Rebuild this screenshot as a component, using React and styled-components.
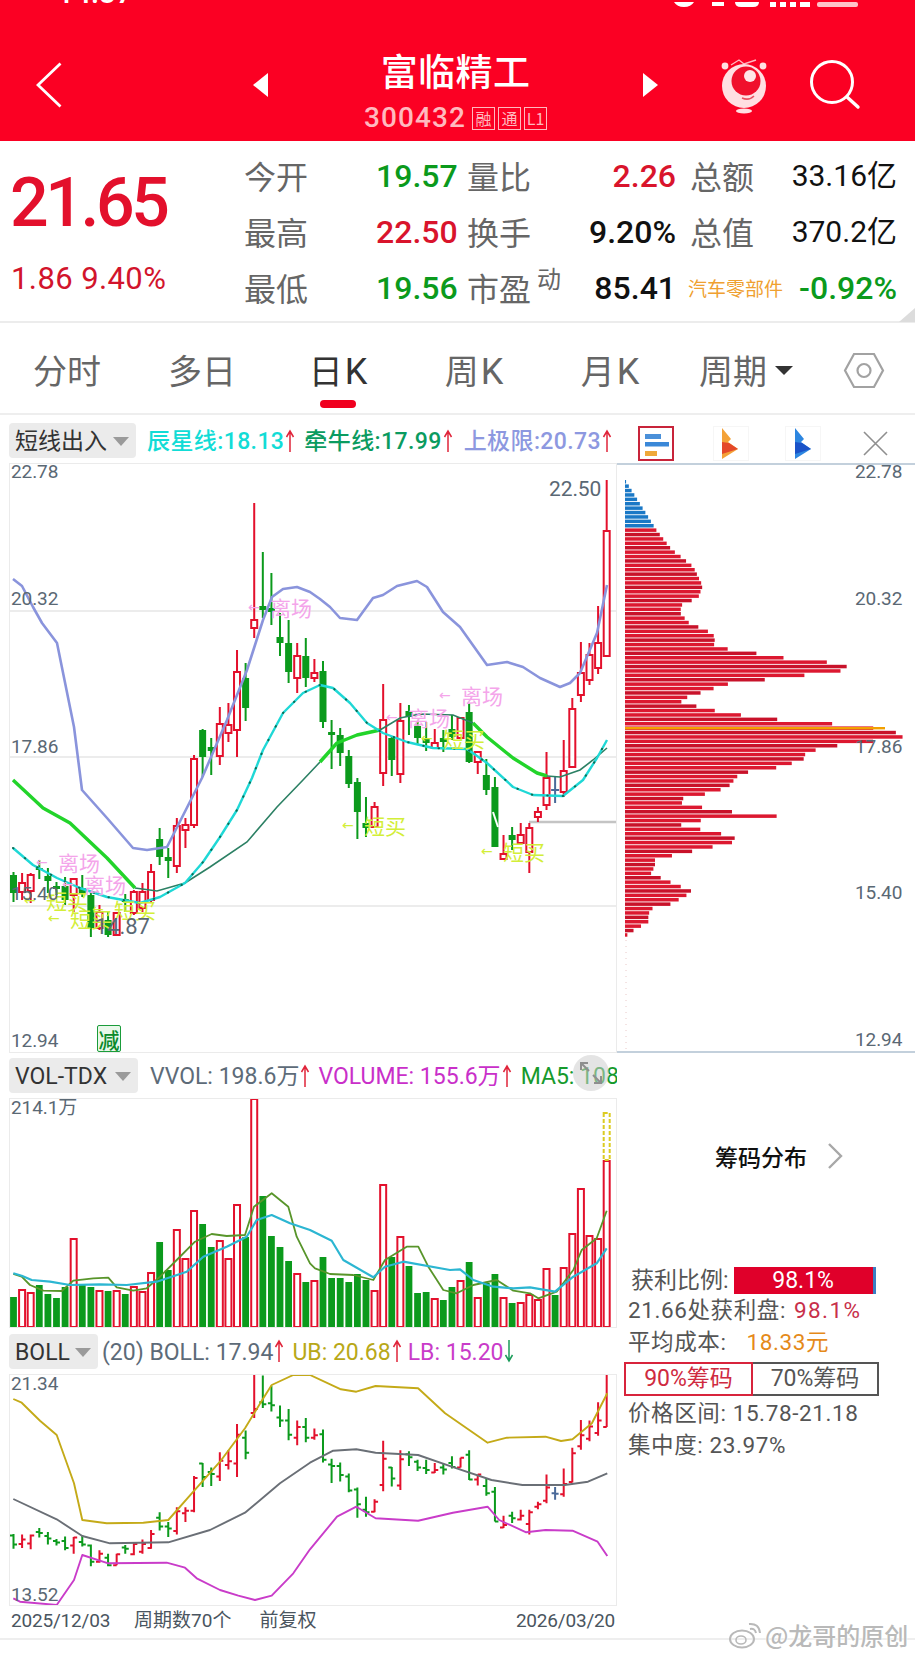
// NPM
import React from 'react';
import styled, { createGlobalStyle } from 'styled-components';

// CONFIG
const CJK = '"Noto Sans CJK SC", sans-serif';
const NUM = 'Roboto, "Noto Sans CJK SC", sans-serif';
const RED = '#e3102c';
const GREEN = '#0b9a1c';
const SLATE = '#5a6874';

// [high, bodyTop, bodyBottom, low, tone, volumeTop] in page pixels
const BARS = [
  [872, 875, 893, 902, 'g', 1297], [873, 883, 892, 900, 'r', 1289], [873, 875, 891, 903, 'r', 1292],
  [860, 868, 870, 879, 'g', 1285], [868, 876, 881, 893, 'g', 1294], [882, 886, 889, 895, 'g', 1298],
  [877, 886, 900, 905, 'g', 1287], [878, 879, 895, 912, 'r', 1238], [875, 888, 893, 897, 'g', 1285],
  [893, 895, 928, 937, 'g', 1287], [905, 912, 928, 930, 'r', 1290], [912, 920, 935, 937, 'g', 1291],
  [912, 913, 935, 935, 'r', 1290], [894, 899, 902, 912, 'g', 1294], [890, 892, 913, 915, 'r', 1286],
  [883, 892, 908, 912, 'r', 1291], [864, 872, 900, 902, 'r', 1272], [828, 839, 857, 865, 'g', 1242],
  [848, 857, 861, 878, 'g', 1270], [818, 826, 866, 873, 'r', 1229], [818, 825, 830, 848, 'r', 1258],
  [755, 759, 825, 828, 'r', 1210], [729, 730, 757, 777, 'g', 1224], [738, 747, 751, 775, 'g', 1247],
  [707, 724, 756, 765, 'r', 1240], [703, 725, 733, 742, 'r', 1258], [650, 672, 730, 757, 'r', 1204],
  [663, 678, 708, 721, 'g', 1237], [503, 620, 628, 638, 'r', 1098], [552, 606, 610, 618, 'g', 1196],
  [573, 608, 612, 625, 'g', 1236], [613, 637, 643, 656, 'g', 1247], [620, 643, 672, 683, 'g', 1261],
  [643, 656, 678, 693, 'r', 1273], [638, 656, 678, 687, 'g', 1282], [659, 673, 678, 682, 'r', 1280],
  [661, 671, 722, 728, 'g', 1257], [720, 732, 735, 769, 'g', 1278], [728, 735, 753, 766, 'g', 1278],
  [750, 756, 784, 788, 'g', 1282], [778, 782, 812, 839, 'g', 1274], [797, 823, 828, 837, 'g', 1280],
  [802, 807, 827, 828, 'r', 1290], [684, 720, 773, 786, 'r', 1184], [737, 738, 760, 776, 'g', 1257],
  [703, 721, 774, 783, 'r', 1236], [705, 711, 717, 735, 'g', 1266], [722, 726, 738, 745, 'g', 1293],
  [722, 739, 743, 751, 'g', 1292], [729, 743, 748, 749, 'r', 1298], [730, 738, 742, 752, 'g', 1300],
  [715, 729, 737, 740, 'g', 1287], [718, 718, 738, 738, 'r', 1280], [703, 712, 762, 763, 'g', 1262],
  [752, 752, 762, 774, 'r', 1297], [759, 775, 790, 795, 'g', 1283], [777, 787, 847, 847, 'g', 1274],
  [835, 854, 859, 860, 'r', 1297], [827, 835, 840, 850, 'g', 1303], [823, 835, 843, 845, 'r', 1302],
  [823, 828, 852, 873, 'r', 1294], [807, 812, 817, 822, 'r', 1299], [752, 778, 805, 810, 'r', 1268],
  [777, 790, 791, 803, 'b', 1295], [740, 771, 792, 797, 'r', 1267], [698, 709, 767, 768, 'r', 1233],
  [642, 673, 695, 702, 'r', 1188], [643, 655, 680, 685, 'r', 1235], [606, 643, 668, 674, 'r', 1238],
  [480, 531, 656, 656, 'r', 1160],
];

const barX = i => 13.5 + 8.597 * i;
const toPath = pts => pts.map((p, i) => `${i ? 'L' : 'M'}${p[0].toFixed(1)} ${p[1].toFixed(1)}`).join(' ');
const fromZoom = (ox, oy, kx, pts) => pts.map(([x, y]) => [ox + x / kx, oy + y / 3]);

const LIMIT_LINE = [
  [13, 579], [22, 586], [33, 607], [42, 623], [57, 643], [74, 727], [82, 790], [107, 818], [133, 848], [147, 850],
  [167, 847], [202, 778], [227, 720], [247, 670], [263, 620], [272, 597], [283, 589], [297, 587], [310, 592], [320, 599],
  [330, 607], [340, 618], [357, 620], [373, 598], [383, 595], [397, 586], [417, 581], [427, 587], [443, 612], [460, 627],
  [487, 665], [507, 662], [523, 667], [540, 678], [560, 687], [570, 683], [580, 673], [597, 633], [607, 585],
];
const STAR_LINE = [
  [13, 848], [33, 865], [57, 878], [80, 888], [107, 897], [140, 903], [160, 897], [185, 883], [203, 862], [220, 837],
  [237, 810], [252, 778], [263, 750], [283, 713], [303, 693], [320, 685], [333, 688], [350, 703], [367, 723], [383, 733],
  [407, 742], [433, 748], [467, 749], [487, 763], [513, 787], [533, 795], [563, 796], [583, 780], [597, 758], [607, 740],
];
const BULL_BOLD = [
  [[13, 780], [43, 808], [70, 823], [107, 858], [135, 888]],
  [[320, 762], [337, 743], [357, 735], [380, 730]],
  [[473, 723], [487, 737], [513, 758], [537, 773], [547, 776]],
];
const BULL_THIN = [
  [[135, 888], [157, 891], [185, 883], [210, 867], [247, 842], [277, 807], [303, 780], [320, 762]],
  [[380, 730], [400, 718], [420, 714], [453, 715], [473, 723]],
  [[547, 776], [560, 777], [580, 770], [593, 760], [607, 748]],
];

const MA5 = [
  ...fromZoom(0, 1050, 3, [[40, 672], [65, 680], [90, 705], [130, 722], [185, 723], [220, 692], [280, 685], [325, 683], [350, 712], [400, 722], [440, 715], [480, 680], [530, 630], [585, 575], [635, 552], [680, 558], [735, 555], [762, 470], [815, 430], [865, 470], [890, 560], [930, 640]]),
  ...fromZoom(310, 1050, 3, [[15, 655], [60, 672], [130, 675], [190, 690], [225, 630], [290, 590], [325, 590], [355, 650], [400, 720], [440, 730], [490, 705], [560, 690], [610, 722], [660, 730], [685, 745], [740, 725], [790, 660], [815, 600], [860, 565], [890, 482]]),
];
const MA10 = [
  ...fromZoom(0, 1050, 3, [[40, 670], [65, 677], [95, 690], [150, 695], [210, 705], [300, 703], [380, 705], [470, 695], [560, 665], [610, 620], [680, 590], [740, 560], [770, 510], [815, 495], [870, 520], [930, 540]]),
  ...fromZoom(310, 1050, 3, [[65, 572], [100, 630], [190, 682], [225, 650], [280, 635], [420, 660], [450, 658], [490, 690], [550, 710], [610, 715], [660, 712], [735, 725], [790, 680], [860, 640], [890, 595]]),
];

const BOLL_UP = [
  ...fromZoom(0, 1330, 3, [[40, 207], [65, 218], [120, 272], [170, 315], [222, 460], [247, 570], [320, 580], [430, 578], [505, 570], [580, 485], [660, 395], [735, 295], [790, 205], [815, 165], [880, 135], [930, 135]]),
  ...fromZoom(310, 1330, 2.59, [[80, 178], [120, 185], [170, 168], [280, 175], [350, 250], [460, 338], [510, 323], [610, 320], [650, 333], [680, 328], [730, 280], [770, 190]]),
];
const BOLL_MID = [
  ...fromZoom(0, 1330, 3, [[40, 507], [170, 568], [247, 618], [330, 640], [505, 637], [630, 600], [735, 548], [840, 460], [930, 398]]),
  ...fromZoom(310, 1330, 2.59, [[60, 362], [120, 358], [170, 368], [280, 375], [380, 415], [470, 450], [550, 465], [660, 465], [720, 455], [770, 430]]),
];
const BOLL_LOW = [
  ...fromZoom(0, 1330, 3, [[40, 805], [60, 815], [170, 825], [222, 750], [247, 675], [325, 700], [500, 698], [555, 713], [590, 745], [660, 780], [715, 797], [765, 810], [815, 797], [880, 730], [930, 658]]),
  ...fromZoom(310, 1330, 2.59, [[70, 560], [120, 530], [170, 565], [280, 572], [370, 548], [460, 530], [490, 570], [560, 607], [610, 600], [680, 602], [745, 635], [770, 678]]),
];

// chip distribution outline: [y, x] in crop pixels (y / 2.615, x / 3)
const CHIP_SHAPE = [
  [52, 48], [180, 140], [230, 185], [250, 215], [275, 250], [325, 278], [355, 265], [375, 215], [395, 210], [420, 235],
  [450, 310], [470, 315], [485, 310], [495, 405], [510, 490], [520, 610], [530, 710], [545, 710], [555, 620], [570, 465],
  [580, 360], [590, 320], [600, 290], [610, 250], [625, 205], [635, 240], [650, 310], [660, 380], [670, 440], [680, 610],
  [690, 720], [700, 825], [710, 865], [718, 890], [730, 800], [745, 660], [762, 580], [772, 595], [785, 560], [800, 500],
  [815, 390], [830, 375], [850, 355], [865, 310], [880, 220], [895, 215], [910, 320], [918, 390], [925, 525], [932, 425],
  [940, 230], [955, 205], [965, 310], [975, 340], [990, 395], [1005, 320], [1020, 240], [1040, 135], [1060, 135], [1075, 120],
  [1095, 170], [1110, 210], [1125, 250], [1140, 215], [1155, 190], [1170, 120], [1190, 115], [1205, 115], [1220, 80], [1240, 48],
];

const chipWidthAt = zy => {
  for (let i = 1; i < CHIP_SHAPE.length; i++) {
    const [y0, x0] = CHIP_SHAPE[i - 1];
    const [y1, x1] = CHIP_SHAPE[i];
    if (zy <= y1) return x0 + ((x1 - x0) * (zy - y0)) / (y1 - y0);
  }
  return 48;
};

const CHIP_ROWS = [];
for (let y = 480; y < 935; y += 4.4) {
  const zy = (y - 460) * 2.615;
  CHIP_ROWS.push({ y, w: (chipWidthAt(zy) - 45) / 3, blue: y < 528 });
}

const SIGNALS = [
  { x: 248, y: 596, tone: 'exit', text: '离场' },
  { x: 36, y: 851, tone: 'exit', text: '离场' },
  { x: 62, y: 873, tone: 'exit', text: '离场' },
  { x: 439, y: 684, tone: 'exit', text: '离场' },
  { x: 386, y: 706, tone: 'exit', text: '离场' },
  { x: 24, y: 889, tone: 'buy', text: '短买' },
  { x: 48, y: 907, tone: 'buy', text: '短买' },
  { x: 92, y: 898, tone: 'buy', text: '短买' },
  { x: 421, y: 727, tone: 'buy', text: '短买' },
  { x: 342, y: 814, tone: 'buy', text: '短买' },
  { x: 481, y: 840, tone: 'buy', text: '短买' },
];

// STYLES
const GlobalStyle = createGlobalStyle`
  html, body { margin: 0; padding: 0; background: #fff; }
  * { box-sizing: border-box; }
`;

const Page = styled.div`
  position: relative;
  width: 915px;
  height: 1658px;
  overflow: hidden;
  background: #fff;
  font-family: ${CJK};
`;

const Header = styled.header`
  height: 141px;
  background: #fb0023;
  color: #fff;
`;

const StatusBar = styled.div`
  height: 8px;
  padding: 0 57px 0 57px;
  display: flex;
  justify-content: space-between;
  align-items: flex-end;
  overflow: hidden;
  font: 500 30px/30px ${NUM};
`;

const HeaderRow = styled.div`
  height: 133px;
  padding: 20px 0 0 36px;
  display: flex;
  align-items: center;
`;

const BackIcon = styled.svg`
  width: 26px;
  height: 46px;
  margin-right: 191px;
`;

const NavArrow = styled.svg`
  width: 16px;
  height: 24px;
`;

const TitleBlock = styled.div`
  width: 373px;
  align-self: flex-start;
  margin-top: 20px;
  display: flex;
  flex-direction: column;
  align-items: center;
`;

const Title = styled.h1`
  margin: 0;
  font: 500 37px/44px ${CJK};
  letter-spacing: 0.4px;
`;

const CodeRow = styled.div`
  margin-top: 11px;
  height: 30px;
  display: flex;
  align-items: center;
  color: #ffb9bf;
  font: 500 28px/30px ${NUM};
  letter-spacing: 1.1px;
`;

const Badge = styled.span`
  width: 23px;
  height: 23px;
  margin-left: ${props => (props.$first ? '6px' : '3px')};
  display: inline-flex;
  align-items: center;
  justify-content: center;
  border: 1px solid #ffb9bf;
  font: 400 16px/21px ${CJK};
  letter-spacing: 0;
`;

const Mascot = styled.svg`
  width: 50px;
  height: 58px;
  margin-left: 61px;
`;

const SearchIcon = styled.svg`
  width: 52px;
  height: 52px;
  margin-left: 40px;
`;

const Quote = styled.section`
  height: 182px;
  display: flex;
  border-bottom: 2px solid #ececec;
  position: relative;
`;

const QuoteCorner = styled.div`
  position: absolute;
  right: 0;
  bottom: -1px;
  width: 0;
  height: 0;
  border-left: 16px solid transparent;
  border-bottom: 14px solid #dcdcdc;
`;

const Headline = styled.div`
  width: 244px;
  padding-left: 10px;
  display: flex;
  flex-direction: column;
`;

const LastPrice = styled.div`
  margin-top: 27px;
  color: ${RED};
  font: 500 68px/70px ${NUM};
  letter-spacing: -3.4px;
`;

const PriceChange = styled.div`
  margin-top: 23px;
  padding-left: 1px;
  color: #d2142c;
  font: 400 31px/36px ${NUM};
  letter-spacing: 0.4px;
`;

const StatGrid = styled.div`
  padding-top: 7px;
  display: grid;
  grid-template-columns: 132px 91px 223px 207px;
  grid-auto-rows: 56px;
`;

const Cell = styled.div`
  display: flex;
  align-items: center;
  justify-content: space-between;
  padding-right: ${props => (props.$pad ? '14px' : '0')};
`;

const StatLabel = styled.span`
  margin-top: -2px;
  color: #666;
  font: 400 32px/40px ${CJK};
`;

const StatSup = styled.sup`
  margin: 0 auto 20px 6px;
  color: #666;
  font: 400 24px/28px ${CJK};
  vertical-align: baseline;
`;

const toneColor = {
  up: '#d9142c',
  down: '#0b9a1c',
  flat: '#111',
};

const StatValue = styled.span`
  color: ${props => toneColor[props.$tone]};
  font: 500 32px/40px ${NUM};
`;

const AmountValue = styled.span`
  color: #111;
  font: 400 30px/40px ${NUM};
`;

const SectorName = styled.span`
  margin-left: -2px;
  color: #efa030;
  font: 400 19px/40px ${CJK};
`;

const Tabs = styled.nav`
  height: 92px;
  padding: 27px 0 0 0;
  display: flex;
  border-bottom: 2px solid #eeeeee;
`;

const Tab = styled.div`
  width: ${props => (props.$first ? '134px' : '136px')};
  display: flex;
  flex-direction: column;
  align-items: center;
`;

const TabLabel = styled.div`
  display: flex;
  align-items: baseline;
  height: 40px;
  color: ${props => (props.$active ? '#333' : '#666')};
  font: 400 34px/40px ${CJK};
  white-space: nowrap;
`;

const TabLatin = styled.span`
  margin-left: 2px;
  font: 400 36px/40px ${NUM};
`;

const TabCaret = styled.span`
  align-self: center;
  margin-left: 8px;
  width: 0;
  height: 0;
  border-left: 9px solid transparent;
  border-right: 9px solid transparent;
  border-top: 9px solid #333;
`;

const TabMark = styled.div`
  width: 36px;
  height: 8px;
  margin-top: 10px;
  border-radius: 4px;
  background: ${props => (props.$active ? '#f0001f' : 'transparent')};
`;

const HexIcon = styled.svg`
  width: 42px;
  height: 37px;
  margin: 2px 0 0 29px;
`;

const Workspace = styled.div`
  display: grid;
  grid-template-columns: 617px 298px;
`;

const ChartColumn = styled.div`
  display: flex;
  flex-direction: column;
`;

const Toolbar = styled.div`
  position: relative;
  height: ${props => props.$height}px;
  padding: ${props => props.$drop || 0}px 0 0 9px;
  display: flex;
  align-items: center;
  overflow: hidden;
  white-space: nowrap;
`;

const Picker = styled.div`
  flex: none;
  width: ${props => props.$width}px;
  height: 35px;
  padding: 2px 0 0 6px;
  display: flex;
  align-items: center;
  border-radius: 4px;
  background: #ebebeb;
  color: #333;
  font: 400 23px/33px ${NUM};
`;

const PickerCaret = styled.span`
  margin-left: auto;
  margin-right: 7px;
  width: 0;
  height: 0;
  border-left: 8px solid transparent;
  border-right: 8px solid transparent;
  border-top: 9px solid #9a9a9a;
`;

const Readout = styled.span`
  flex: none;
  margin-left: ${props => props.$gap}px;
  padding-top: 2px;
  color: ${props => props.$color};
  font: ${props => props.$weight || 400} 23px/33px ${NUM};
  letter-spacing: ${props => props.$track || 0}px;
`;

const ArrowIcon = styled.svg`
  flex: none;
  width: 10px;
  height: 24px;
  margin-left: 1px;
`;

const ExpandBubble = styled.div`
  position: absolute;
  left: 573px;
  top: 2px;
  width: 36px;
  height: 36px;
  border-radius: 50%;
  background: rgba(205, 205, 205, 0.55);
  display: flex;
  align-items: center;
  justify-content: center;
`;

const ChartPane = styled.div`
  position: relative;
  width: 608px;
  height: ${props => props.$height}px;
  margin-left: 9px;
  border: 1px solid #ebebeb;
  overflow: hidden;
`;

const ChartSvg = styled.svg`
  display: block;
`;

const PriceTag = styled.span`
  position: absolute;
  left: ${props => (props.$x === undefined ? '1px' : `${props.$x}px`)};
  top: ${props => props.$y}px;
  color: ${SLATE};
  font: 400 ${props => props.$size || 19}px/16px ${NUM};
  letter-spacing: -0.1px;
`;

const Signal = styled.span`
  position: absolute;
  left: ${props => props.$x}px;
  top: ${props => props.$y}px;
  display: flex;
  align-items: center;
  color: ${props => (props.$tone === 'exit' ? '#f4a5ea' : '#d3ee38')};
  font: 400 21px/22px ${CJK};
  white-space: nowrap;
`;

const SignalArrow = styled.span`
  width: 22px;
  font: 400 14px/22px "DejaVu Sans", sans-serif;
`;

const ReduceBadge = styled.span`
  position: absolute;
  left: 87px;
  bottom: 0;
  width: 24px;
  height: 27px;
  display: flex;
  align-items: center;
  justify-content: center;
  border: 1px solid #1a9c3a;
  border-radius: 2px;
  background: #e9f8ea;
  color: #0b8a2a;
  font: 500 21px/24px ${CJK};
`;

const DateRow = styled.div`
  height: 32px;
  padding: 0 2px 2px 11px;
  display: flex;
  align-items: center;
  color: #4a5560;
  font: 400 19px/24px ${NUM};
`;

const DateStart = styled.span`
  letter-spacing: -0.2px;
`;

const DateNote = styled.span`
  margin-left: ${props => props.$gap}px;
`;

const DateEnd = styled.span`
  margin-left: auto;
  letter-spacing: -0.2px;
`;

const SideColumn = styled.aside`
  display: flex;
  flex-direction: column;
`;

const SideTools = styled.div`
  height: 48px;
  padding: 8px 0 0 21px;
  display: flex;
  align-items: center;
`;

const ChartToggle = styled.svg`
  width: 36px;
  height: 35px;
  margin-right: ${props => props.$gap}px;
`;

const ChipPane = styled.div`
  position: relative;
  height: 590px;
  border-top: 2px solid #c3d0dc;
  border-bottom: 2px solid #c3d0dc;
`;

const ChipPanel = styled.div`
  padding: 88px 0 0 11px;
  display: flex;
  flex-direction: column;
`;

const ChipLink = styled.div`
  height: 30px;
  padding-left: 87px;
  display: flex;
  align-items: center;
  color: #111;
  font: 500 23px/30px ${CJK};
`;

const LinkChevron = styled.svg`
  width: 16px;
  height: 26px;
  margin-left: 20px;
`;

const ProfitRow = styled.div`
  margin-top: 96px;
  height: 27px;
  padding-left: 3px;
  display: flex;
  align-items: center;
  color: #555;
  font: 400 23px/27px ${NUM};
`;

const ProfitBar = styled.div`
  position: relative;
  width: 142px;
  height: 27px;
  margin-left: 5px;
  background: #e0002a;
  border-right: 3px solid #3a7fc4;
  color: #fff;
  font: 400 23px/28px ${NUM};
  text-align: center;
`;

const ChipLine = styled.div`
  height: 32px;
  display: flex;
  align-items: center;
  color: #555;
  font: 400 22.5px/32px ${NUM};
  letter-spacing: 0.6px;
  white-space: nowrap;
`;

const ChipValue = styled.span`
  margin-left: ${props => props.$gap}px;
  color: ${props => props.$color};
  letter-spacing: ${props => props.$track || 0.6}px;
`;

const RangeSwitch = styled.div`
  width: 255px;
  height: 34px;
  margin: 4px 0 1px -4px;
  display: flex;
`;

const RangeOption = styled.div`
  height: 34px;
  width: ${props => (props.$active ? 129 : 126)}px;
  display: flex;
  align-items: center;
  justify-content: center;
  border: 2px solid ${props => (props.$active ? '#d8243c' : '#555')};
  border-left-width: ${props => (props.$active ? 2 : 0)}px;
  color: ${props => (props.$active ? '#cf2a40' : '#555')};
  font: 400 23px/30px ${NUM};
`;

const Footer = styled.footer`
  height: 20px;
  border-top: 2px solid #eeeeee;
`;

const Watermark = styled.div`
  position: absolute;
  left: 729px;
  top: 1620px;
  display: flex;
  align-items: center;
  color: #b9b9b9;
  font: 500 24px/30px ${CJK};
  text-shadow: 0 0 2px #fff, 0 0 2px #fff;
`;

const WeiboIcon = styled.svg`
  width: 33px;
  height: 28px;
  margin-right: 3px;
`;

// MODULE
const Arrow = ({ up = true, color = '#e0243a' }) => (
  <ArrowIcon viewBox="0 0 10 24">
    {up ? (
      <path d="M5 23V3M1.5 8L5 2l3.5 6" fill="none" stroke={color} strokeWidth="1.5" />
    ) : (
      <path d="M5 1v20M1.5 16L5 22l3.5-6" fill="none" stroke={color} strokeWidth="1.5" />
    )}
  </ArrowIcon>
);

const candleTint = tone => (tone === 'g' ? GREEN : tone === 'b' ? '#4a6a9a' : RED);

const Candles = () =>
  BARS.map(([high, top, bottom, low, tone], i) => {
    const x = barX(i);
    const tint = candleTint(tone);
    return (
      <g key={i}>
        <path d={`M${x} ${high}V${top}M${x} ${bottom}V${low}`} stroke={tint} strokeWidth="2" fill="none" />
        {tone === 'r' ? (
          <rect x={x - 3} y={top} width="6" height={bottom - top} fill="#fff" stroke={tint} strokeWidth="2" />
        ) : tone === 'g' ? (
          <rect x={x - 3.5} y={top} width="7" height={bottom - top} fill={tint} />
        ) : (
          <path d={`M${x - 4} ${top}H${x + 4}`} stroke={tint} strokeWidth="2" />
        )}
      </g>
    );
  });

const mainChart = (
  <ChartSvg width="606" height="588" viewBox="10 464 606 588">
    <path d="M10 611H616M10 757H616M10 906H616" stroke="#ececec" strokeWidth="2" />
    <path d="M529 822H616" stroke="#c4c4c4" strokeWidth="2.5" />
    <Candles />
    <path d="M493 812L498 827" stroke="#fff" strokeWidth="2" />
    {BULL_THIN.map((pts, i) => (
      <path key={i} d={toPath(pts)} fill="none" stroke="#2c8064" strokeWidth="1.6" />
    ))}
    {BULL_BOLD.map((pts, i) => (
      <path key={i} d={toPath(pts)} fill="none" stroke="#22d42a" strokeWidth="3.4" strokeLinejoin="round" />
    ))}
    <path d={toPath(STAR_LINE)} fill="none" stroke="#1fd8d6" strokeWidth="2.4" strokeLinejoin="round" />
    <path d={toPath(STAR_LINE)} fill="none" stroke="#0c6d55" strokeWidth="2" strokeLinecap="round" strokeDasharray="0.5 15" />
    <path d={toPath(LIMIT_LINE)} fill="none" stroke="#8a94dc" strokeWidth="2.6" strokeLinejoin="round" />
  </ChartSvg>
);

const volumeChart = (
  <ChartSvg width="606" height="228" viewBox="10 1099 606 228">
    {BARS.map(([, , , , tone, volTop], i) => {
      const x = barX(i);
      return tone === 'r' ? (
        <rect key={i} x={x - 3} y={volTop + 1} width="6" height={1326 - volTop} fill="#fff" stroke={RED} strokeWidth="2" />
      ) : (
        <rect key={i} x={x - 3.4} y={volTop} width="6.8" height={1328 - volTop} fill={GREEN} />
      );
    })}
    <rect x={barX(69) - 3} y="1113" width="6" height="47" fill="none" stroke="#dccb22" strokeWidth="2" strokeDasharray="4 2" />
    <path d={toPath(MA5)} fill="none" stroke="#58952a" strokeWidth="1.8" strokeLinejoin="round" />
    <path d={toPath(MA10)} fill="none" stroke="#2cb6d2" strokeWidth="2.2" strokeLinejoin="round" />
  </ChartSvg>
);

// same prices as the main chart, on the BOLL pane's scale
const bollY = y => 1374 + (21.34 - (22.78 - (y - 463) / 59.86)) * 29.67;

const bollChart = (
  <ChartSvg width="606" height="230" viewBox="10 1375 606 230">
    {BARS.map(([high, top, bottom, low, tone], i) => {
      const x = barX(i);
      const openY = bollY(tone === 'r' ? bottom : top);
      const closeY = bollY(tone === 'r' ? top : bottom);
      return (
        <path
          key={i}
          d={`M${x} ${bollY(high)}V${bollY(low)}M${x - 3.5} ${openY}H${x}M${x} ${closeY}H${x + 3.5}`}
          fill="none"
          stroke={candleTint(tone)}
          strokeWidth="2"
        />
      );
    })}
    <path d={toPath(BOLL_UP)} fill="none" stroke="#c4aa18" strokeWidth="1.9" strokeLinejoin="round" />
    <path d={toPath(BOLL_MID)} fill="none" stroke="#6a6f76" strokeWidth="1.9" strokeLinejoin="round" />
    <path d={toPath(BOLL_LOW)} fill="none" stroke="#c93cc9" strokeWidth="1.9" strokeLinejoin="round" />
  </ChartSvg>
);

const chipChart = (
  <ChartSvg width="298" height="586" viewBox="617 465 298 586">
    {CHIP_ROWS.map((row, i) => (
      <rect
        key={i}
        x="625"
        y={row.y}
        width={Math.max(row.w, 1)}
        height="3.5"
        fill={row.blue ? '#1a78c6' : i % 3 === 0 ? '#c8122a' : '#dc1830'}
      />
    ))}
    <rect x="625" y="727" width="260" height="2.4" fill="#f2a000" />
    <path d="M626 940V1050" stroke="#e8c8c8" strokeWidth="1" strokeDasharray="1 5" />
  </ChartSvg>
);

const StatPair = ({ label, sup, value, tone, pad }) => (
  <Cell $pad={pad}>
    <StatLabel>{label}</StatLabel>
    {sup && <StatSup>{sup}</StatSup>}
    {value && <StatValue $tone={tone}>{value}</StatValue>}
  </Cell>
);

const App = () => (
  <Page>
    <GlobalStyle />

    <Header>
      <StatusBar>
        <span>14:37</span>
        <svg width="184" height="6" viewBox="0 0 184 6">
          <path d="M0 0h20q-3 5-10 5T0 0zM38 0h12v4h-12zM61 0h24q0 5-6 5H67q-6 0-6-5zM96 0h6v5h-6zM106 0h6v5h-6zM116 0h6v5h-6zM126 0h10v5h-10z" fill="#fff" />
          <rect x="143" width="41" height="5" rx="2" fill="#ffc2c8" />
        </svg>
      </StatusBar>
      <HeaderRow>
        <BackIcon viewBox="0 0 26 46">
          <path d="M24.5 1.5L2 23l22.5 21.5" fill="none" stroke="#fff" strokeWidth="2.8" />
        </BackIcon>
        <NavArrow viewBox="0 0 16 24">
          <path d="M15 0v24L0 12z" fill="#fff" />
        </NavArrow>
        <TitleBlock>
          <Title>富临精工</Title>
          <CodeRow>
            300432
            <Badge $first>融</Badge>
            <Badge>通</Badge>
            <Badge>L1</Badge>
          </CodeRow>
        </TitleBlock>
        <NavArrow viewBox="0 0 16 24">
          <path d="M1 0v24l15-12z" fill="#fff" />
        </NavArrow>
        <Mascot viewBox="0 0 50 58">
          <circle cx="6" cy="10" r="3.4" fill="#ffdfe2" />
          <circle cx="44" cy="10" r="3.4" fill="#ffdfe2" />
          <path d="M12 9l8-5 5 4 12-4" fill="none" stroke="#ffb8c0" strokeWidth="1.4" />
          <circle cx="25" cy="30" r="22" fill="#ffdfe2" />
          <circle cx="27" cy="25" r="14.5" fill="#f0102c" />
          <circle cx="31" cy="20" r="6" fill="#ffe6e8" />
          <path d="M23 42q7 3 12-2" fill="none" stroke="#e85060" strokeWidth="1.5" />
          <ellipse cx="25" cy="55" rx="8" ry="2.6" fill="#ffdfe2" />
        </Mascot>
        <SearchIcon viewBox="0 0 52 52">
          <circle cx="23" cy="23" r="20.5" fill="none" stroke="#fff" strokeWidth="3" />
          <path d="M38 38l11 10" stroke="#fff" strokeWidth="3.4" strokeLinecap="round" />
        </SearchIcon>
      </HeaderRow>
    </Header>

    <Quote>
      <Headline>
        <LastPrice>21.65</LastPrice>
        <PriceChange>1.86 9.40%</PriceChange>
      </Headline>
      <StatGrid>
        <StatPair label="今开" />
        <Cell><StatValue $tone="down">19.57</StatValue></Cell>
        <StatPair label="量比" value="2.26" tone="up" pad />
        <Cell>
          <StatLabel>总额</StatLabel>
          <AmountValue>33.16亿</AmountValue>
        </Cell>

        <StatPair label="最高" />
        <Cell><StatValue $tone="up">22.50</StatValue></Cell>
        <StatPair label="换手" value="9.20%" tone="flat" pad />
        <Cell>
          <StatLabel>总值</StatLabel>
          <AmountValue>370.2亿</AmountValue>
        </Cell>

        <StatPair label="最低" />
        <Cell><StatValue $tone="down">19.56</StatValue></Cell>
        <StatPair label="市盈" sup="动" value="85.41" tone="flat" pad />
        <Cell>
          <SectorName>汽车零部件</SectorName>
          <StatValue $tone="down">-0.92%</StatValue>
        </Cell>
      </StatGrid>
      <QuoteCorner />
    </Quote>

    <Tabs>
      <Tab $first><TabLabel>分时</TabLabel><TabMark /></Tab>
      <Tab><TabLabel>多日</TabLabel><TabMark /></Tab>
      <Tab><TabLabel $active>日<TabLatin>K</TabLatin></TabLabel><TabMark $active /></Tab>
      <Tab><TabLabel>周<TabLatin>K</TabLatin></TabLabel><TabMark /></Tab>
      <Tab><TabLabel>月<TabLatin>K</TabLatin></TabLabel><TabMark /></Tab>
      <Tab><TabLabel>周期<TabCaret /></TabLabel><TabMark /></Tab>
      <HexIcon viewBox="0 0 42 37">
        <path d="M11 2h20l9 16.5L31 35H11L2 18.5z" fill="none" stroke="#a2a2a2" strokeWidth="2.2" />
        <circle cx="21" cy="18.5" r="6.5" fill="none" stroke="#a2a2a2" strokeWidth="2.2" />
      </HexIcon>
    </Tabs>

    <Workspace>
      <ChartColumn>
        <Toolbar $height={48} $drop={3}>
          <Picker $width={127}>短线出入<PickerCaret /></Picker>
          <Readout $gap={11} $color="#12dcd6" $track={0.4} $weight={500}>辰星线:18.13</Readout>
          <Arrow />
          <Readout $gap={9} $color="#0a9b60" $track={0.4} $weight={500}>牵牛线:17.99</Readout>
          <Arrow />
          <Readout $gap={11} $color="#8d98e0" $track={0.4} $weight={500}>上极限:20.73</Readout>
          <Arrow />
        </Toolbar>
        <ChartPane $height={590}>
          {mainChart}
          <PriceTag $y={0}>22.78</PriceTag>
          <PriceTag $y={127}>20.32</PriceTag>
          <PriceTag $y={275}>17.86</PriceTag>
          {SIGNALS.map((s, i) => (
            <Signal key={i} $x={s.x - 10} $y={s.y - 464} $tone={s.tone}>
              <SignalArrow>←</SignalArrow>
              {s.text}
            </Signal>
          ))}
          <PriceTag $y={422}>15.40</PriceTag>
          <PriceTag $x={85} $y={455} $size={22}>14.87</PriceTag>
          <PriceTag $x={539} $y={17} $size={21}>22.50</PriceTag>
          <PriceTag $y={569}>12.94</PriceTag>
          <ReduceBadge>减</ReduceBadge>
        </ChartPane>

        <Toolbar $height={45}>
          <Picker $width={129}>VOL-TDX<PickerCaret /></Picker>
          <Readout $gap={12} $color="#5d6b78">VVOL: 198.6万</Readout>
          <Arrow />
          <Readout $gap={8} $color="#c92fc9">VOLUME: 155.6万</Readout>
          <Arrow />
          <Readout $gap={9} $color="#169a2c">MA5: 108.4万</Readout>
          <ExpandBubble>
            <svg width="24" height="24" viewBox="0 0 24 24">
              <path d="M2 9V2h7M2 2l8 8M22 15v7h-7M22 22l-8-8" fill="none" stroke="#8e8e8e" strokeWidth="2" />
            </svg>
          </ExpandBubble>
        </Toolbar>
        <ChartPane $height={230}>
          {volumeChart}
          <PriceTag $y={1}>214.1万</PriceTag>
        </ChartPane>

        <Toolbar $height={46}>
          <Picker $width={89}>BOLL<PickerCaret /></Picker>
          <Readout $gap={4} $color="#5d6b78">(20) BOLL: 17.94</Readout>
          <Arrow />
          <Readout $gap={8} $color="#b8a818">UB: 20.68</Readout>
          <Arrow />
          <Readout $gap={6} $color="#c93cc9">LB: 15.20</Readout>
          <Arrow up={false} color="#1a9c5a" />
        </Toolbar>
        <ChartPane $height={232}>
          {bollChart}
          <PriceTag $y={1}>21.34</PriceTag>
          <PriceTag $y={212}>13.52</PriceTag>
        </ChartPane>
        <DateRow>
          <DateStart>2025/12/03</DateStart>
          <DateNote $gap={24}>周期数70个</DateNote>
          <DateNote $gap={28}>前复权</DateNote>
          <DateEnd>2026/03/20</DateEnd>
        </DateRow>
      </ChartColumn>

      <SideColumn>
        <SideTools>
          <ChartToggle viewBox="0 0 36 35" $gap={39}>
            <rect x="1" y="1" width="34" height="33" fill="#fff" stroke="#c8243a" strokeWidth="2" />
            <rect x="7" y="8" width="16" height="5" fill="#4a90d9" />
            <rect x="7" y="16" width="24" height="4.5" fill="#3a88d8" />
            <rect x="7" y="25" width="12" height="5" fill="#efa93a" />
          </ChartToggle>
          <ChartToggle viewBox="0 0 36 35" $gap={36}>
            <rect x="0.5" y="0.5" width="35" height="34" fill="#fff" stroke="#f6f6f6" />
            <path d="M9 2l9 11-3 3 10 7-16 10z" fill="#f4a238" />
            <path d="M9 16l7 1 9 6-16 5z" fill="#e4482a" />
          </ChartToggle>
          <ChartToggle viewBox="0 0 36 35" $gap={42}>
            <rect x="0.5" y="0.5" width="35" height="34" fill="#fff" stroke="#f6f6f6" />
            <path d="M10 2l9 11-3 3 10 7-16 10z" fill="#2d86e0" />
            <path d="M10 16l7 1 9 6-16 5z" fill="#1a52c8" />
          </ChartToggle>
          <svg width="25" height="25" viewBox="0 0 25 25">
            <path d="M1 1l23 23M24 1L1 24" stroke="#8f8f8f" strokeWidth="1.6" />
          </svg>
        </SideTools>
        <ChipPane>
          {chipChart}
          <PriceTag $x={238} $y={-1}>22.78</PriceTag>
          <PriceTag $x={238} $y={126}>20.32</PriceTag>
          <PriceTag $x={238} $y={274}>17.86</PriceTag>
          <PriceTag $x={238} $y={420}>15.40</PriceTag>
          <PriceTag $x={238} $y={567}>12.94</PriceTag>
        </ChipPane>
        <ChipPanel>
          <ChipLink>
            筹码分布
            <LinkChevron viewBox="0 0 16 26">
              <path d="M2 1l12 12L2 25" fill="none" stroke="#a8a8a8" strokeWidth="2.4" />
            </LinkChevron>
          </ChipLink>
          <ProfitRow>
            获利比例:
            <ProfitBar>98.1%</ProfitBar>
          </ProfitRow>
          <ChipLine>
            21.66处获利盘:
            <ChipValue $gap={8} $color="#c8304a" $track={1.4}>98.1%</ChipValue>
          </ChipLine>
          <ChipLine>
            平均成本:
            <ChipValue $gap={20} $color="#e58a1a">18.33元</ChipValue>
          </ChipLine>
          <RangeSwitch>
            <RangeOption $active>90%筹码</RangeOption>
            <RangeOption>70%筹码</RangeOption>
          </RangeSwitch>
          <ChipLine>价格区间: 15.78-21.18</ChipLine>
          <ChipLine>集中度: 23.97%</ChipLine>
        </ChipPanel>
      </SideColumn>
    </Workspace>

    <Footer />

    <Watermark>
      <WeiboIcon viewBox="0 0 33 28">
        <ellipse cx="13" cy="18" rx="12" ry="8.5" fill="none" stroke="#b9b9b9" strokeWidth="2" />
        <ellipse cx="12" cy="19" rx="5" ry="4" fill="none" stroke="#b9b9b9" strokeWidth="1.6" />
        <path d="M20 3q10-1 11 9M21 8q5-1 6 4" fill="none" stroke="#b9b9b9" strokeWidth="2" />
      </WeiboIcon>
      @龙哥的原创
    </Watermark>
  </Page>
);

export default App;
